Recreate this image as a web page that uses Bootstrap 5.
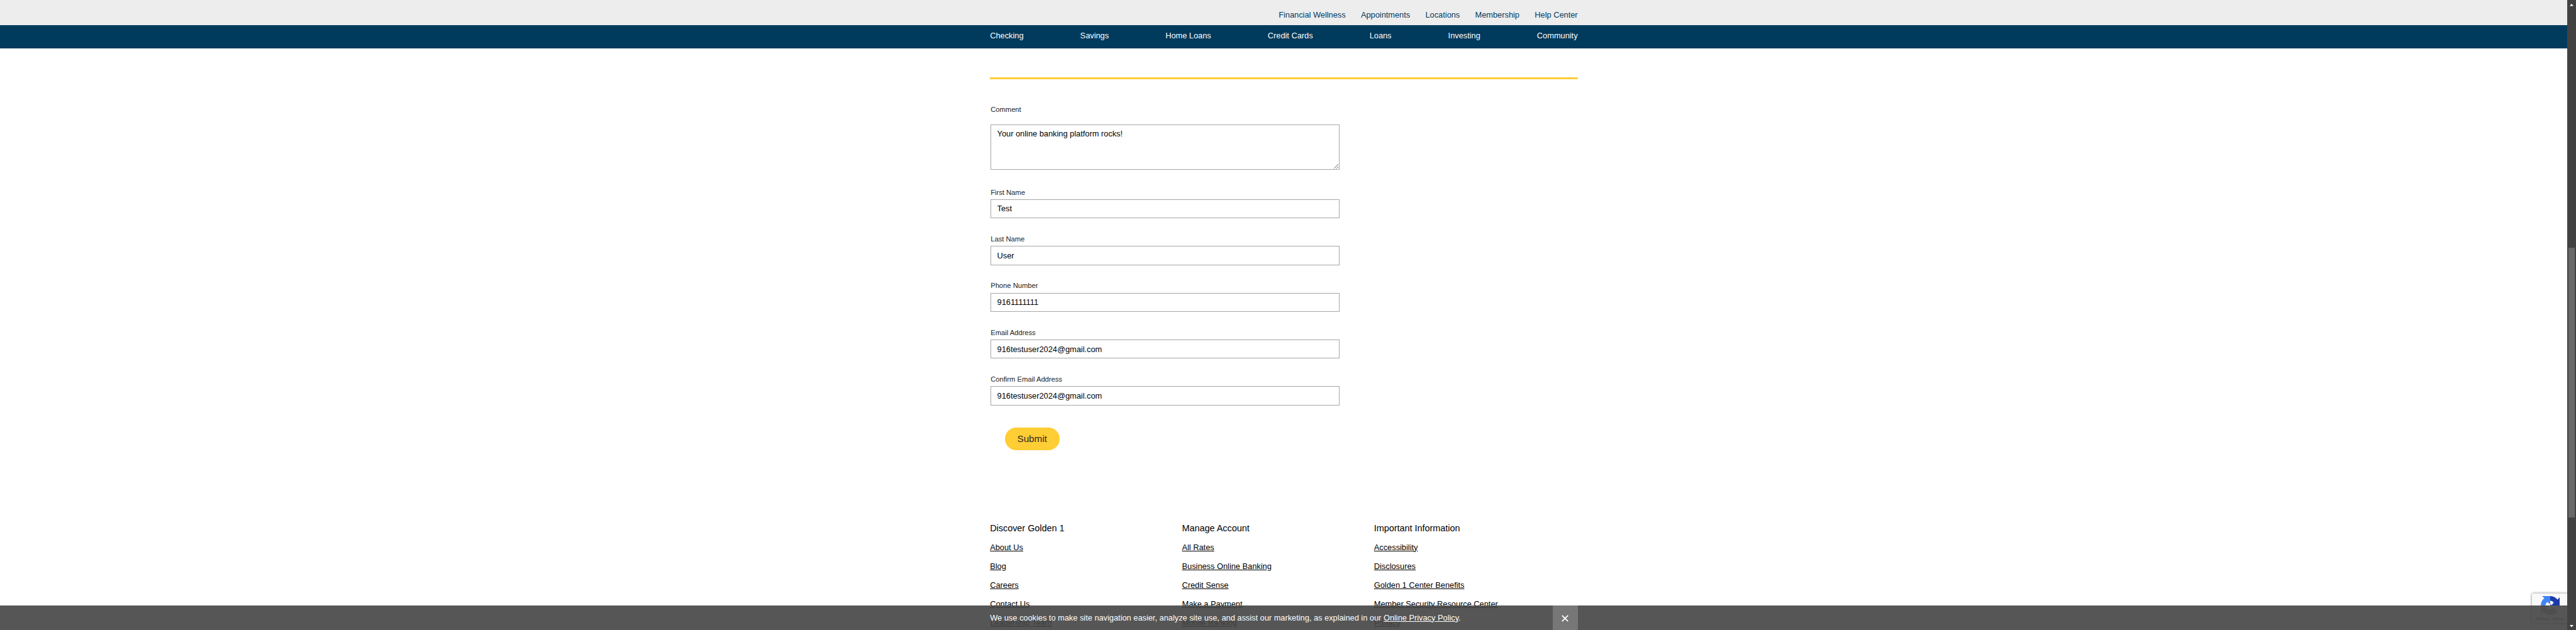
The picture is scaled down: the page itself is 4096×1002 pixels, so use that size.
<!DOCTYPE html>
<html lang="en">
<head>
<meta charset="utf-8">
<meta name="viewport" content="width=device-width, initial-scale=1">
<title>Contact Us | Golden 1</title>
<link href="https://cdn.jsdelivr.net/npm/bootstrap@5.3.0/dist/css/bootstrap.min.css" rel="stylesheet">
<style>
html,body{height:100%;overflow:hidden}
body{font-family:"Liberation Sans",Arial,sans-serif;font-size:12.8px;line-height:16px;color:#000;background:#fff}
.page{width:4082.4px;height:1002px;overflow:hidden}
.wrap{width:934.4px;margin-left:1574.2px}
.topbar{height:40px;background:#ededed}
.topbar .wrap{gap:24.3px;padding-top:16.4px}
.topbar a{color:#003a5d}
.mainnav{height:36.8px;background:#003a5d}
.mainnav .wrap{padding-top:9.4px}
main{padding-top:46.4px}
.rule{height:2.4px;background:#ffcd34}
.contact{width:555.2px;margin-left:1px;padding-top:41.8px}
.contact label{font-size:11.2px;line-height:14px;color:#222;display:block}
.contact .form-control{border:1px solid #a6a6a6;border-radius:0;padding:0 9.4px;font-size:12.8px;color:#000;line-height:16px;background:#fff}
.contact input.form-control{height:30.4px;margin-top:4.2px}
.contact textarea.form-control{height:72px;padding-top:5.7px;min-height:0;resize:vertical;display:block;margin:17px 0 28.2px}
.field{height:74.4px}
.btn-gold{width:87.2px;height:36px;padding:0;border:0;border-radius:18px;background:#ffcd34;color:#2d2926;font-size:15.2px;line-height:36px;margin:9.4px 0 0 22.4px;display:block}
.foot{padding-top:115.3px}
.foot .fcol{width:305.3px}
.foot h2{font-size:14.4px;line-height:18px;font-weight:400;margin:0 0 13.4px}
.foot li{height:30px}
.foot a{color:#000}
.cookie{position:fixed;left:0;bottom:0;width:4082.4px;height:39px;background:#444;opacity:.9;color:#fff;z-index:5}
.cookie a{color:#fff}
.cookie .dismiss{width:40px;height:39px;background:#696969;border:0;padding:0}
.captcha{position:fixed;left:4026.4px;top:943.6px;width:70px;height:47.6px;background:#f9f9f9;border-radius:2px;box-shadow:0 0 4px #808080;z-index:2;font:6.4px/8px Roboto,sans-serif;color:#555}
.captcha svg{display:block;margin:4.4px 0 0 13.6px}
.captcha div{margin:3.2px 0 0 5.8px;white-space:nowrap;letter-spacing:.05px}
.sbar{position:fixed;right:0;top:0;width:13.6px;height:1002px;background:#424242;z-index:9;padding:5.6px 0 4.4px}
.sbar .thumb{width:10.4px;height:429.6px;background:#686868;margin:384px .4px auto 0}
</style>
<script src="https://cdn.jsdelivr.net/npm/bootstrap@5.3.0/dist/js/bootstrap.bundle.min.js"></script>
</head>
<body>
<div class="page">
<header>
<div class="topbar"><nav class="wrap d-flex justify-content-end">
<a class="text-decoration-none" href="#">Financial Wellness</a><a class="text-decoration-none" href="#">Appointments</a><a class="text-decoration-none" href="#">Locations</a><a class="text-decoration-none" href="#">Membership</a><a class="text-decoration-none" href="#">Help Center</a>
</nav></div>
<div class="mainnav"><nav class="wrap d-flex justify-content-between">
<a class="text-white text-decoration-none" href="#">Checking</a><a class="text-white text-decoration-none" href="#">Savings</a><a class="text-white text-decoration-none" href="#">Home Loans</a><a class="text-white text-decoration-none" href="#">Credit Cards</a><a class="text-white text-decoration-none" href="#">Loans</a><a class="text-white text-decoration-none" href="#">Investing</a><a class="text-white text-decoration-none" href="#">Community</a>
</nav></div>
</header>
<main class="wrap">
<div class="rule"></div>
<form class="contact">
<label for="c">Comment</label><textarea id="c" class="form-control" spellcheck="false">Your online banking platform rocks!</textarea>
<div class="field"><label for="f">First Name</label><input id="f" class="form-control" value="Test"></div>
<div class="field"><label for="l">Last Name</label><input id="l" class="form-control" value="User"></div>
<div class="field"><label for="p">Phone Number</label><input id="p" class="form-control" value="9161111111"></div>
<div class="field"><label for="e">Email Address</label><input id="e" class="form-control" value="916testuser2024@gmail.com"></div>
<div class="field"><label for="g">Confirm Email Address</label><input id="g" class="form-control" value="916testuser2024@gmail.com"></div>
<button type="button" class="btn btn-gold">Submit</button>
</form>
</main>
<footer class="foot wrap d-flex">
<section class="fcol"><h2>Discover Golden 1</h2><ul class="list-unstyled mb-0"><li><a href="#">About Us</a></li><li><a href="#">Blog</a></li><li><a href="#">Careers</a></li><li><a href="#">Contact Us</a></li><li><a href="#">Leadership Team</a></li></ul></section>
<section class="fcol"><h2>Manage Account</h2><ul class="list-unstyled mb-0"><li><a href="#">All Rates</a></li><li><a href="#">Business Online Banking</a></li><li><a href="#">Credit Sense</a></li><li><a href="#">Make a Payment</a></li><li><a href="#">Mobile Banking</a></li></ul></section>
<section class="fcol"><h2>Important Information</h2><ul class="list-unstyled mb-0"><li><a href="#">Accessibility</a></li><li><a href="#">Disclosures</a></li><li><a href="#">Golden 1 Center Benefits</a></li><li><a href="#">Member Security Resource Center</a></li><li><a href="#">Privacy</a></li></ul></section>
</footer>
</div>
<div class="captcha">
<svg width="30" height="30" viewBox="0 0 64 64">
<path fill="#1c3aa9" d="M64 32V4.400l-7.600 7.600A32 32 0 0 0 32 0v16c5.500 0 9.500 2.500 12 7l-8 8-4-4v5z"/>
<path fill="#4285f4" d="M32 0H4.400l7.600 7.600A32 32 0 0 0 0 32h16c0-6 2.500-9.500 7-12l9 8z"/>
<path fill="#ababab" d="M0 32v27.600l7.600-7.600A32 32 0 0 0 56.500 52.500L43.500 39.500a14 14 0 0 1-23.500 1.500l9-9z"/>
</svg>
<div>Privacy - Terms</div>
</div>
<div class="cookie"><div class="wrap d-flex justify-content-between align-items-center"><span>We use cookies to make site navigation easier, analyze site use, and assist our marketing, as explained in our <a href="#">Online Privacy Policy</a>.</span><button class="dismiss" aria-label="Close"><svg width="11" height="11" viewBox="0 0 11 11" stroke="#fff" stroke-width="1.8"><path d="M.8.8l9.400 9.400M10.200.8L.8 10.200"/></svg></button></div></div>
<div class="sbar d-flex flex-column align-items-center">
<svg width="6" height="4" viewBox="0 0 6 4"><path fill="#fff" d="M3 0l3 3.500H0z"/></svg>
<div class="thumb"></div>
<svg width="6" height="4" viewBox="0 0 6 4"><path fill="#fff" d="M0 0h6L3 3.500z"/></svg>
</div>
</body>
</html>
